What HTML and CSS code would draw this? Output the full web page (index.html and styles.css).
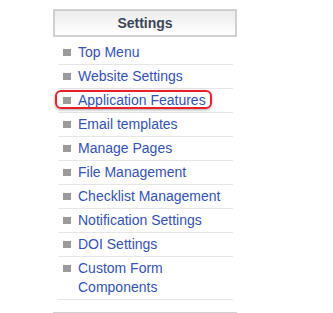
FILE: index.html
```html
<!DOCTYPE html>
<html lang="en">
<head>
    <meta charset="UTF-8">
    <title>Settings</title>
    <link rel="stylesheet" href="styles.css">
</head>
<body>
    <div class="sidebar">
        <div class="box-header">Settings</div>
        <ul class="menu">
            <li><a href="#">Top Menu</a></li>
            <li><a href="#">Website Settings</a></li>
            <li class="highlight"><a href="#">Application Features</a></li>
            <li><a href="#">Email templates</a></li>
            <li><a href="#">Manage Pages</a></li>
            <li><a href="#">File Management</a></li>
            <li><a href="#">Checklist Management</a></li>
            <li><a href="#">Notification Settings</a></li>
            <li><a href="#">DOI Settings</a></li>
            <li><a href="#">Custom Form Components</a></li>
        </ul>
        <div class="box-next"></div>
    </div>
</body>
</html>
```
FILE: styles.css
```css
body {
    font-family: Arial, "Liberation Sans", sans-serif;
    margin: 0;
    padding: 9px 0 0 53px;
    background: #fff;
}
.sidebar {
    width: 184px;
}
.box-header {
    border: 2px solid #d0d0d0;
    background: linear-gradient(#ececec, #fff);
    color: #3d4656;
    font-size: 14px;
    font-weight: bold;
    text-align: center;
    height: 24px;
    line-height: 24px;
}
.menu {
    list-style: none;
    margin: 4px 4px 0 5px;
    padding: 0;
}
.menu li {
    position: relative;
    padding: 2px 0 2px 20px;
    line-height: 19px;
    font-size: 14px;
    border-bottom: 1px solid #e6e6e6;
}
.menu li::before {
    content: "";
    position: absolute;
    left: 5px;
    top: 8px;
    width: 8px;
    height: 7px;
    background: #9a9a9a;
}
.menu a {
    color: #3352b5;
    text-decoration: none;
}
.menu li:last-child a {
    display: block;
    width: 110px;
}
.menu .highlight::after {
    content: "";
    position: absolute;
    left: -3px;
    top: 1px;
    width: 153px;
    height: 15px;
    border: 2px solid #e8202a;
    border-radius: 6px;
    box-shadow: 0 1px 3px rgba(0, 0, 0, 0.35);
}
.box-next {
    margin-top: 12px;
    border-top: 2px solid #d0d0d0;
    height: 10px;
}
```
